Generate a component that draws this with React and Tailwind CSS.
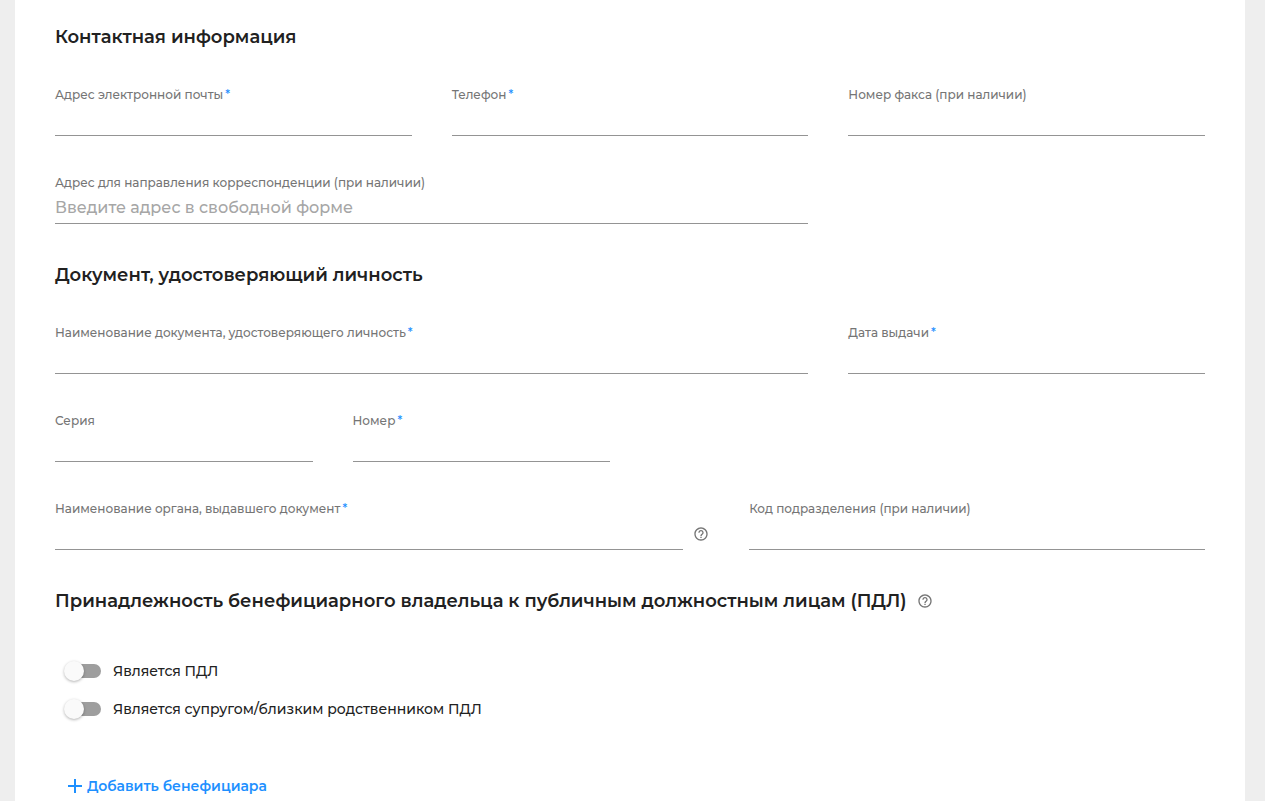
import React, { useId } from 'react';
import { MdAdd, MdHelpOutline } from 'react-icons/md';

const SectionTitle = ({ children, help }) => (
    <div className="flex items-center gap-2.5 my-10">
        <h2 className="text-lg leading-[22px] font-semibold text-[#212121]">{children}</h2>
        {help && <HelpButton label="Подсказка о ПДЛ" />}
    </div>
);

const HelpButton = ({ label }) => (
    <button type="button" aria-label={label} className="shrink-0 text-[#757575] cursor-pointer">
        <MdHelpOutline className="size-4" />
    </button>
);

// Label above an underlined input
const Field = ({ label, required, placeholder, type = 'text', className = '' }) => {
    const id = useId();

    return (
        <div className={`flex flex-col ${className}`}>
            <label htmlFor={id} className="h-4 text-xs leading-3.5 text-[#757575] whitespace-nowrap">
                {label}
                {required && <span className="ml-0.5 text-[#1e90ff]">*</span>}
            </label>
            <input
                id={id}
                type={type}
                required={required}
                placeholder={placeholder}
                className="h-8 w-full border-b border-[#949494] bg-transparent text-base text-[#212121] placeholder:text-[#a6a6a6] outline-none focus:border-[#1e90ff]"
            />
        </div>
    );
};

const Switch = ({ label }) => (
    <label className="flex w-fit items-center h-[38px] pl-3 gap-3 text-sm text-[#212121] cursor-pointer">
        <input
            type="checkbox"
            role="switch"
            className="relative appearance-none w-[34px] h-3.5 rounded-full bg-[#9e9e9e] cursor-pointer checked:bg-[#8ec7ff] before:absolute before:-left-[3px] before:-top-[3px] before:size-5 before:rounded-full before:bg-[#fafafa] before:shadow-[0_1px_3px_rgba(0,0,0,0.3)] checked:before:translate-x-5 checked:before:bg-[#1e90ff]"
        />
        {label}
    </label>
);

const App = () => (
    <div className="min-h-screen bg-[#eeeeee] pl-[15px] pr-5 font-medium font-['Montserrat','Inter',sans-serif]">
        <form className="flow-root min-h-screen bg-white px-10">
            <div className="-mt-3.5 flow-root">
                <SectionTitle>Контактная информация</SectionTitle>
                <div className="grid grid-cols-12 gap-10">
                    <Field className="col-span-4" label="Адрес электронной почты" type="email" required />
                    <Field className="col-span-4" label="Телефон" type="tel" required />
                    <Field className="col-span-4" label="Номер факса (при наличии)" type="tel" />
                    <Field
                        className="col-span-8"
                        label="Адрес для направления корреспонденции (при наличии)"
                        placeholder="Введите адрес в свободной форме"
                    />
                </div>

                <SectionTitle>Документ, удостоверяющий личность</SectionTitle>
                <div className="grid grid-cols-12 gap-10">
                    <Field className="col-span-8" label="Наименование документа, удостоверяющего личность" required />
                    <Field className="col-span-4" label="Дата выдачи" required />
                    <Field className="col-span-3" label="Серия" />
                    <Field className="col-span-3 col-end-7" label="Номер" required />
                    <div className="col-span-7 col-start-1 flex items-end gap-2.5">
                        <Field className="grow" label="Наименование органа, выдавшего документ" required />
                        <div className="flex h-8 items-center">
                            <HelpButton label="Подсказка об органе, выдавшем документ" />
                        </div>
                    </div>
                    <Field className="col-span-5" label="Код подразделения (при наличии)" />
                </div>

                <SectionTitle help>Принадлежность бенефициарного владельца к публичным должностным лицам (ПДЛ)</SectionTitle>
                <Switch label="Является ПДЛ" />
                <Switch label="Является супругом/близким родственником ПДЛ" />

                <button type="button" className="mt-10 ml-2 flex h-9 items-center text-sm font-semibold text-[#1e90ff] cursor-pointer">
                    <MdAdd className="size-6" />
                    Добавить бенефициара
                </button>
            </div>
        </form>
    </div>
);

export default App;
